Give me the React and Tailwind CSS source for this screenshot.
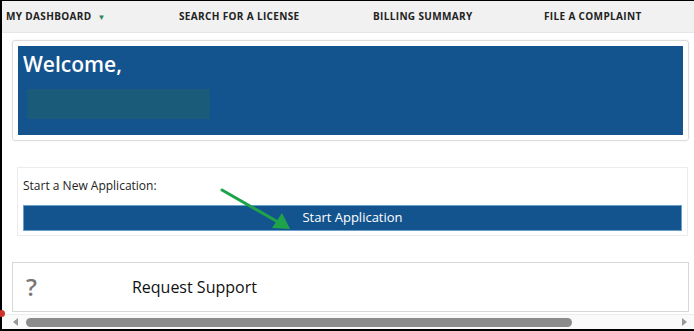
import React from "react";

export default function App() {
  return (
    <div className="w-[694px] h-[331px] overflow-hidden bg-black pt-px pl-[2px] pb-[2px]" style={{ fontFamily: '"Open Sans", sans-serif' }}>
      <div className="relative w-[692px] h-[328px] bg-white flex flex-col">
        {/* nav */}
        <div className="h-[32px] bg-[#f1f1f1] border-b border-[#e6e6ea] flex items-center text-[10px] font-bold tracking-[0.35px] text-[#222] whitespace-nowrap">
          <div className="w-[177px] pl-[4px] flex items-center">
            <span>MY DASHBOARD</span>
            <span className="ml-[6px] text-[#2f8a5a] text-[8px]">▼</span>
          </div>
          <div className="w-[194px]">SEARCH FOR A LICENSE</div>
          <div className="w-[171px]">BILLING SUMMARY</div>
          <div>FILE A COMPLAINT</div>
        </div>

        {/* welcome */}
        <div className="mt-[7px] ml-[10px] w-[677px] h-[101px] border border-[#dcdcdc] rounded-[3px] p-[5px] shadow-[0_0_2px_rgba(0,0,0,0.08)]">
          <div className="h-full bg-[#14548e] pt-[4px] pl-[5px]">
            <div className="text-white text-[21px] font-semibold leading-[28px]">Welcome,</div>
            <div className="mt-[11px] ml-[4px] w-[183px] h-[30px] bg-[#1a5b79]" />
          </div>
        </div>

        {/* start application */}
        <div className="mt-[26px] ml-[15px] w-[671px] h-[69px] border border-[#ececec] px-[5px] pt-[9px]">
          <div className="text-[12px] text-[#222] leading-[17px]">Start a New Application:</div>
          <div className="mt-[11px] h-[26px] bg-[#14548e] border border-[#6aa0cc] flex items-center justify-center text-white text-[13px]">
            Start Application
          </div>
        </div>

        {/* request support */}
        <div className="mt-[26px] ml-[10px] w-[677px] h-[50px] border border-[#d8d8d8] flex items-center">
          <span className="ml-[13px] text-[#777] text-[24px] font-semibold leading-none">?</span>
          <span className="ml-[95px] text-[16px] text-[#111] font-medium">Request Support</span>
        </div>

        {/* scrollbar */}
        <div className="mt-auto h-[15px] bg-[#fafafa] border-t border-[#ececec] flex items-center">
          <svg width="8" height="8" viewBox="0 0 8 8" className="ml-[10px]"><path d="M6 0 L1 4 L6 8 Z" fill="#999" /></svg>
          <div className="ml-[6px] w-[546px] h-[9px] rounded-full bg-[#8c8c8c]" />
          <svg width="8" height="8" viewBox="0 0 8 8" className="ml-auto mr-[6px]"><path d="M2 0 L7 4 L2 8 Z" fill="#999" /></svg>
        </div>

        {/* green arrow annotation */}
        <svg className="absolute left-[216px] top-[185px]" width="80" height="50" viewBox="0 0 80 50">
          <line x1="4" y1="4" x2="60" y2="36" stroke="#1fa34a" strokeWidth="3" strokeLinecap="round" />
          <path d="M72 43 L54 42 L64 27 Z" fill="#1fa34a" />
        </svg>
        {/* red dot */}
        <div className="absolute left-[-4px] top-[309px] w-[7px] h-[7px] rounded-full bg-[#d0312d]" />
      </div>
    </div>
  );
}
